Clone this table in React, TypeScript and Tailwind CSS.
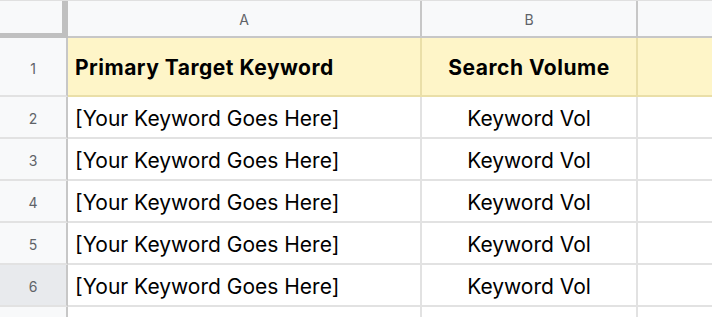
const rows = [2, 3, 4, 5, 6];

export default function App() {
  return (
    <div className="w-[712px] h-[317px] overflow-hidden bg-white font-['Inter',sans-serif]">
      <div className="grid grid-cols-[68px_354px_216px_1fr] border-t border-[#e0e0e0]">
        {/* column header row */}
        <div className="h-[37px] bg-[#f8f9fa] border-r-[6px] border-b-[5px] border-[#c0c0c0]" />
        <div className="h-[37px] bg-[#f8f9fa] border-r-2 border-b-2 border-[#c7c7c7] flex items-center justify-center pt-[2px] text-[14px] text-[#5f6368]">
          A
        </div>
        <div className="h-[37px] bg-[#f8f9fa] border-r-2 border-b-2 border-[#c7c7c7] flex items-center justify-center pt-[2px] text-[14px] text-[#5f6368]">
          B
        </div>
        <div className="h-[37px] bg-[#f8f9fa] border-b-2 border-[#c7c7c7]" />

        {/* row 1 – header */}
        <div className="h-[59px] bg-[#f8f9fa] border-r-2 border-b-2 border-r-[#c7c7c7] border-b-[#e2e2e2] flex items-center justify-center pt-[3px] text-[14px] text-[#5f6368]">
          1
        </div>
        <div className="h-[59px] bg-[#fef5c8] border-r-2 border-b-2 border-[#eadfa8] flex items-center pl-[7px] pt-[3px] text-[21px] font-bold tracking-[0.5px] text-black">
          Primary Target Keyword
        </div>
        <div className="h-[59px] bg-[#fef5c8] border-r-2 border-b-2 border-[#eadfa8] flex items-center justify-center pt-[3px] text-[21px] font-bold tracking-[0.5px] text-black">
          Search Volume
        </div>
        <div className="h-[59px] bg-[#fef5c8] border-b-2 border-[#eadfa8]" />

        {rows.map((n) => (
          <Row key={n} n={n} selected={n === 6} />
        ))}

        {/* partial row 7 */}
        <div className="h-[12px] bg-[#f8f9fa] border-r-2 border-[#c7c7c7]" />
        <div className="h-[12px] border-r-2 border-[#e2e2e2]" />
        <div className="h-[12px] border-r-2 border-[#e2e2e2]" />
        <div className="h-[12px]" />
      </div>
    </div>
  );
}

function Row({ n, selected }: { n: number; selected: boolean }) {
  return (
    <>
      <div
        className={`h-[42px] border-r-2 border-b-2 border-r-[#c7c7c7] border-b-[#e2e2e2] flex items-center justify-center pt-[3px] text-[14px] text-[#5f6368] ${
          selected ? 'bg-[#e8eaed]' : 'bg-[#f8f9fa]'
        }`}
      >
        {n}
      </div>
      <div className="h-[42px] border-r-2 border-b-2 border-[#e2e2e2] flex items-center pl-[7px] pt-[3px] text-[21px] text-black">
        [Your Keyword Goes Here]
      </div>
      <div className="h-[42px] border-r-2 border-b-2 border-[#e2e2e2] flex items-center justify-center pt-[3px] text-[21px] text-black">
        Keyword Vol
      </div>
      <div className="h-[42px] border-b-2 border-[#e2e2e2]" />
    </>
  );
}
